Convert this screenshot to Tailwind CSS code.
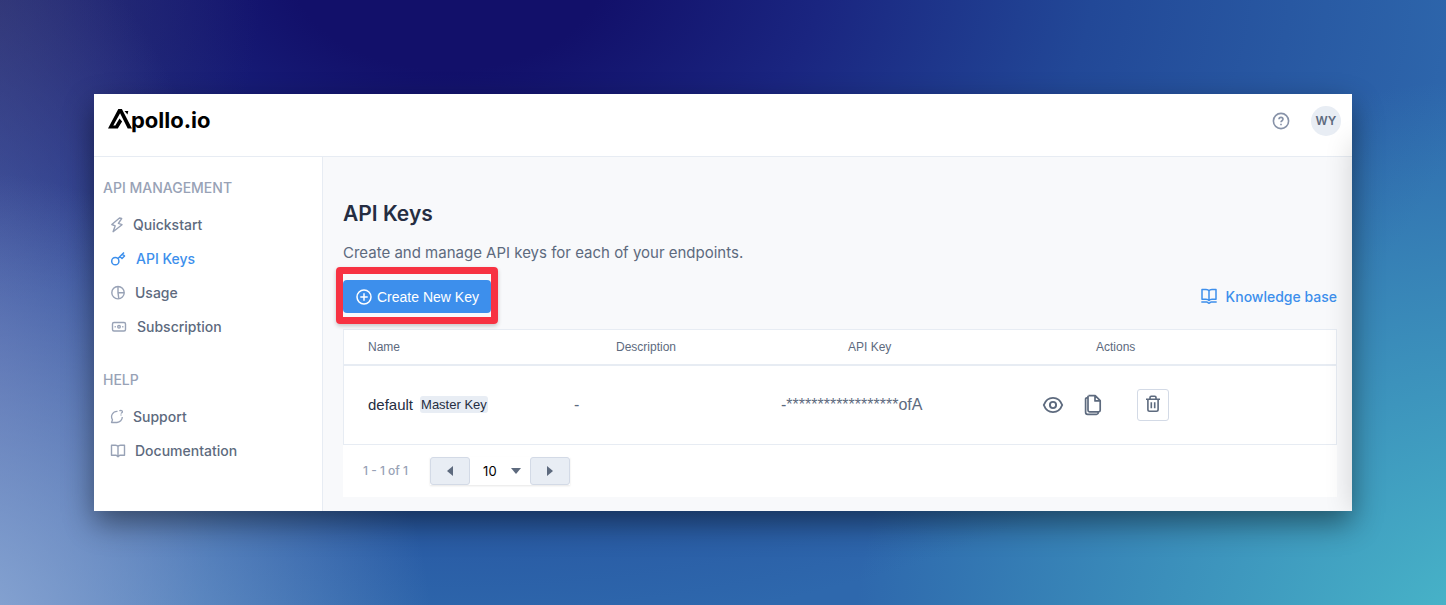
<!DOCTYPE html>
<html lang="en">
<head>
<meta charset="utf-8">
<meta name="viewport" content="width=device-width, initial-scale=1">
<title>API Keys - Apollo.io</title>
<script src="https://cdn.jsdelivr.net/npm/@tailwindcss/browser@4"></script>
</head>
<body class="min-h-screen bg-[radial-gradient(ellipse_34%_80%_at_-4%_108%,#8fabd6_0%,#8fabd600_100%),radial-gradient(ellipse_20%_80%_at_-4%_62%,#5a64aacc_0%,#5a64aa00_100%),radial-gradient(ellipse_20%_50%_at_-2%_0%,#303068cc_0%,#30306800_100%),radial-gradient(ellipse_45%_95%_at_104%_108%,#4abccb_0%,#4abccb00_100%),radial-gradient(ellipse_72%_110%_at_31%_-5%,#12106a_0%,#12106a_15%,#1a2580_36%,#224897_62%,#2e68ad_100%)] p-[94px] font-[Inter,sans-serif] text-sm text-[#5d6a7e] antialiased">

<div class="relative overflow-hidden bg-white shadow-[0_12px_28px_rgba(0,0,0,0.45)]">
  <header class="flex h-[63px] items-start justify-between border-b border-[#e7ecf3] pt-3 pr-[11px] pl-3.5">
    <a href="#" aria-label="Apollo.io" class="flex items-center text-black">
      <svg class="h-7 w-6" viewBox="0 0 24 28" fill="currentColor" aria-hidden="true">
        <path d="M0 22.500 10.300 3h3.600L24 22.500h-4.300L12.100 7.300 5.300 19.500h2l4.200-7 2.600 2.900-4.300 7.100z"/>
        <path d="M16.500 5h3.800l-.8 3.600z"/>
      </svg>
      <span class="-ml-px text-[22px] leading-7 font-bold">pollo.io</span>
    </a>
    <div class="flex items-center gap-[21px]">
      <button type="button" aria-label="Help" class="text-[#8792a8]">
        <svg class="size-[18px]" viewBox="0 0 18 18" fill="none" stroke="currentColor" stroke-width="1.600" aria-hidden="true"><circle cx="9" cy="9" r="7.600"/><path d="M7 7.300c0-2.600 4-2.600 4 0 0 1.500-2 1.400-2 3M9 11.800v1.500"/></svg>
      </button>
      <button type="button" class="size-[30px] rounded-full bg-[#e8edf4] text-xs font-semibold">WY</button>
    </div>
  </header>

  <div class="flex">
    <nav class="w-[229px] shrink-0 border-r border-[#e7ecf3] pt-[21px] pl-[9px] font-medium" aria-label="Sidebar">
      <h2 class="leading-5 text-[#98a2b6]">API MANAGEMENT</h2>
      <ul class="mt-2.5 pl-[7px] leading-[34px]">
        <li><a href="#" class="flex items-center gap-[9px]">
          <svg class="h-4 w-3.5 text-[#98a2b6]" viewBox="0 0 14 16" fill="none" stroke="currentColor" stroke-width="1.400" stroke-linejoin="round" aria-hidden="true"><path d="M9.500 1 1.800 7.500l3.400 1.300-2.100 5.900 8.900-7-3.600-1.300 3.300-4.900z"/></svg>
          Quickstart</a></li>
        <li><a href="#" aria-current="page" class="flex items-center gap-[9px] text-[#3d8fec]">
          <svg class="h-4 w-[17px]" viewBox="0 0 17 16" fill="none" stroke="currentColor" stroke-width="1.500" stroke-linejoin="round" aria-hidden="true"><circle cx="5.300" cy="10.200" r="3.600"/><path d="m8 7.500 6-6M10 5.500l2 2 2.500-2.500-2-2"/></svg>
          API Keys</a></li>
        <li><a href="#" class="flex items-center gap-[9px]">
          <svg class="h-4 w-4 text-[#98a2b6]" viewBox="0 0 16 16" fill="none" stroke="currentColor" stroke-width="1.400" aria-hidden="true"><circle cx="8" cy="7.700" r="6.200"/><path d="M8 1.500v6.200h6.200M8 7.700l.8 6"/></svg>
          Usage</a></li>
        <li><a href="#" class="flex items-center gap-[9px]">
          <svg class="h-4 w-[18px] text-[#98a2b6]" viewBox="0 0 18 16" fill="none" stroke="currentColor" stroke-width="1.400" aria-hidden="true"><rect x="2.500" y="3.500" width="13" height="8.500" rx="1.500"/><circle cx="9" cy="7.800" r="1.300"/><path d="M4.600 7.800h1.200M12.200 7.800h1.200"/></svg>
          Subscription</a></li>
      </ul>
      <h2 class="mt-[26px] leading-5 text-[#98a2b6]">HELP</h2>
      <ul class="mt-2.5 pl-[7px] leading-[34px]">
        <li><a href="#" class="flex items-center gap-[9px]">
          <svg class="h-4 w-3.5 text-[#98a2b6]" viewBox="0 0 14 16" fill="none" stroke="currentColor" stroke-width="1.300" stroke-linejoin="round" aria-hidden="true"><path d="M7.500 2.300a5.500 5.500 0 0 0-5 8.500L1.500 13.500H7a5.500 5.500 0 0 0 5.300-5.500"/><path d="M9.500 2.200c1-1.400 3.300-.6 2.900.8-.2.700-1.200.9-1.300 1.700M11 5.600v.8"/></svg>
          Support</a></li>
        <li><a href="#" class="flex items-center gap-[9px]">
          <svg class="h-4 w-4 text-[#98a2b6]" viewBox="0 0 16 16" fill="none" stroke="currentColor" stroke-width="1.400" stroke-linejoin="round" aria-hidden="true"><path d="M8 3.500C7.500 2.500 6.500 2.300 5.500 2.300h-4v9.900h4.700L8 13.800l1.800-1.600h4.700V2.300h-4C9.500 2.300 8.500 2.500 8 3.500zM8 3.500v10"/></svg>
          Documentation</a></li>
      </ul>
    </nav>

    <main class="min-w-0 flex-1 bg-[#f8f9fb] pt-[43px] pr-[15px] pb-3.5 pl-5">
      <h1 class="text-[21px] leading-7 font-semibold text-[#252d42]">API Keys</h1>
      <p class="mt-[13px] text-[15px] leading-6">Create and manage API keys for each of your endpoints.</p>

      <div class="mt-[15px] flex items-center justify-between">
        <div class="relative">
          <button type="button" class="flex h-[33px] w-[148px] items-center gap-[5px] rounded bg-[#3d8fec] pl-[13px] font-['Liberation_Sans',sans-serif] text-white">
            <svg class="size-4" viewBox="0 0 16 16" fill="none" stroke="currentColor" stroke-width="1.500" aria-hidden="true"><circle cx="8" cy="8" r="7"/><path d="M8 4.300v7.400M4.300 8h7.400"/></svg>
            Create New Key
          </button>
          <div class="pointer-events-none absolute -top-[13px] -right-[7px] -bottom-[11px] -left-[7px] rounded-[4px] border-7 border-[#f73242] shadow-[0_2px_4px_rgba(0,0,0,0.2)]"></div>
        </div>
        <a href="#" class="flex items-center gap-2 font-medium text-[#3d8fec]">
          <svg class="size-[18px]" viewBox="0 0 18 18" fill="none" stroke="currentColor" stroke-width="1.500" stroke-linejoin="round" aria-hidden="true"><path d="M9 3C8.500 1.700 7 1.500 6 1.500H2v9.800h4c1.500 0 2.500.4 3 1.200.5-.8 1.500-1.200 3-1.200h4V1.500h-4c-1 0-2.500.2-3 1.500zM9 3v9.500M1.300 13.900h5.500c.8 0 1.200 1.300 2.200 1.300s1.400-1.300 2.200-1.300h5.500"/></svg>
          Knowledge base
        </a>
      </div>

      <section class="mt-4 bg-white">
        <table class="block border border-[#e7ecf3] font-['Liberation_Sans',sans-serif]">
          <thead class="block">
            <tr class="grid h-[36px] grid-cols-[248fr_232fr_248fr_264fr] items-center border-b-2 border-[#e7ecf3] text-left text-xs">
              <th scope="col" class="pl-6 font-normal">Name</th>
              <th scope="col" class="pl-6 font-normal">Description</th>
              <th scope="col" class="pl-6 font-normal">API Key</th>
              <th scope="col" class="pl-6 font-normal">Actions</th>
            </tr>
          </thead>
          <tbody class="block">
            <tr class="grid h-[78px] grid-cols-[230fr_207fr_261fr_294fr] items-center">
              <td class="flex items-center gap-[7px] pl-6 text-[15px] text-[#252d42]">default <span class="rounded-[3px] bg-[#e8edf4] px-px text-[13px] leading-[17px]">Master Key</span></td>
              <td class="text-base">-</td>
              <td class="text-base">-******************ofA</td>
              <td class="flex items-center">
                <button type="button" aria-label="Show key"><svg class="h-5 w-[22px]" viewBox="0 0 22 20" fill="none" stroke="currentColor" stroke-width="1.900" aria-hidden="true"><path d="M1.800 10C3.500 5.500 7 2.900 11 2.900s7.500 2.600 9.200 7.100c-1.700 4.500-5.200 7.100-9.200 7.100S3.500 14.500 1.800 10z"/><circle cx="11" cy="10" r="3.100"/></svg></button>
                <button type="button" aria-label="Copy key" class="ml-5"><svg class="h-[22px] w-[18px]" viewBox="0 0 18 22" fill="none" stroke="currentColor" stroke-width="1.700" stroke-linejoin="round" aria-hidden="true"><path d="M4.500 1.700h6.700l5 5v9.600a1.500 1.500 0 0 1-1.500 1.500H5.500a1.500 1.500 0 0 1-1.500-1.500V1.700M11 1.700v5.200h5.200M4 3.800H2.900a1.300 1.300 0 0 0-1.300 1.300v13.200a2 2 0 0 0 2 2h8.900a1.800 1.800 0 0 0 1.800-1.800"/></svg></button>
                <button type="button" aria-label="Delete key" class="ml-[35px] flex h-8 w-8 items-center justify-center rounded-[3px] border border-[#d3dae6] pb-0.5"><svg class="h-[18px] w-4" viewBox="0 0 16 18" fill="none" stroke="currentColor" stroke-width="1.600" aria-hidden="true"><path d="M1 4.300h14M5 4V2.500A1.200 1.200 0 0 1 6.200 1.300h3.600A1.200 1.200 0 0 1 11 2.500V4M2.900 4.300v10.200A1.700 1.700 0 0 0 4.600 16.200h6.800a1.700 1.700 0 0 0 1.700-1.700V4.300M6.300 7.200v6M9.700 7.200v6"/></svg></button>
              </td>
            </tr>
          </tbody>
        </table>
        <div class="flex items-center py-3 pl-5">
          <span class="text-xs font-medium text-[#98a2b6]">1 - 1 of 1</span>
          <div class="ml-[22px] flex h-7 shadow-[0_1px_2px_rgba(0,0,0,0.1)]">
            <button type="button" aria-label="Previous page" class="flex w-10 items-center justify-center rounded-[3px] border border-[#d3dae6] bg-[#e8edf4]"><svg class="h-2.5 w-1.5" viewBox="0 0 6 10" fill="currentColor" aria-hidden="true"><path d="M6 0v10L0 5z"/></svg></button>
            <div class="relative">
              <select aria-label="Rows per page" class="h-7 w-[60px] appearance-none pl-[13px] text-[13px] text-black"><option>10</option><option>25</option><option>50</option></select>
              <svg class="pointer-events-none absolute top-[11px] right-[9px] h-1.5 w-2.5" viewBox="0 0 10 6" fill="currentColor" aria-hidden="true"><path d="M0 0h10L5 6z"/></svg>
            </div>
            <button type="button" aria-label="Next page" class="flex w-10 items-center justify-center rounded-[3px] border border-[#d3dae6] bg-[#e8edf4]"><svg class="h-2.5 w-1.5" viewBox="0 0 6 10" fill="currentColor" aria-hidden="true"><path d="M0 0v10l6-5z"/></svg></button>
          </div>
        </div>
      </section>
    </main>
  </div>
  <!-- Shade cast by the closed side panel -->
  <div class="pointer-events-none absolute top-12 bottom-0 left-full w-10 shadow-[0_0_28px_rgba(0,0,0,0.16)]"></div>
</div>
</body>
</html>
